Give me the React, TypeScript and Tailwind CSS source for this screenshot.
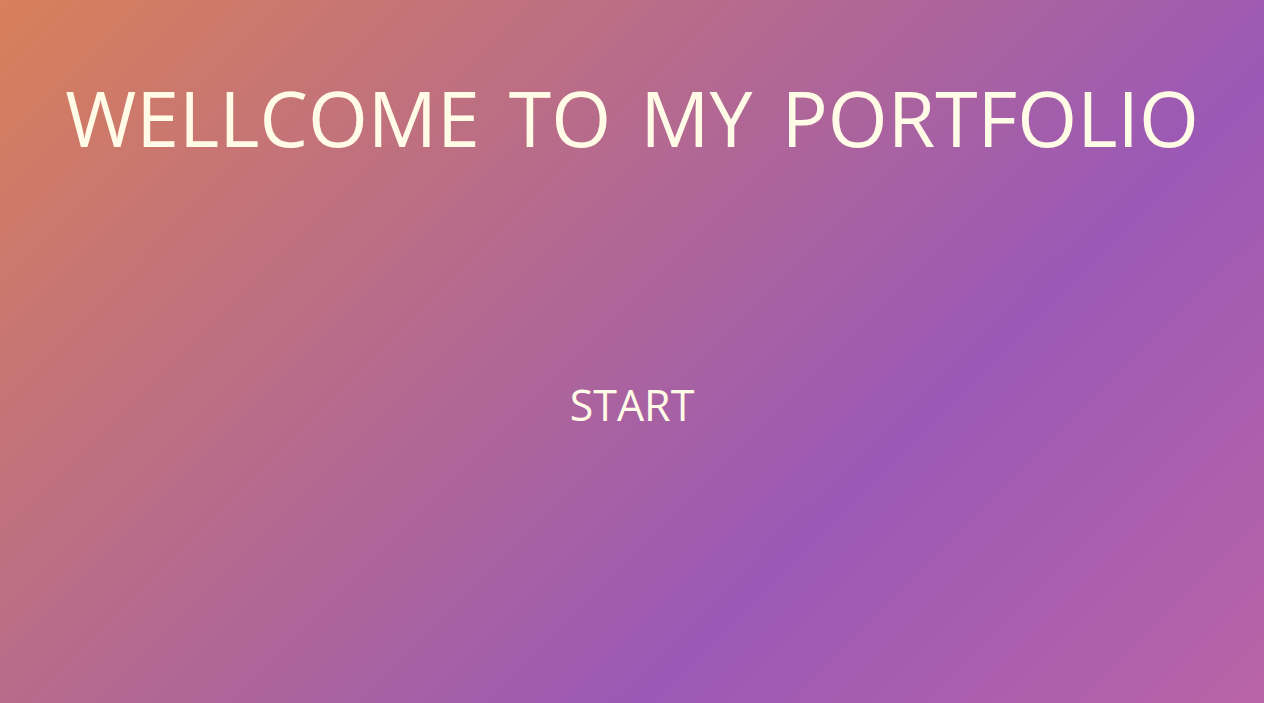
const App = () => {
  return (
    <div
      className="min-h-screen w-full flex flex-col items-center bg-[linear-gradient(135deg,#d8805a_0%,#9b59b6_68%,#b964a6_100%)] text-[#fffbe6]"
      style={{ fontFamily: '"Open Sans", "Noto Sans", sans-serif' }}
    >
      <h1 className="mt-[62px] text-[77px] leading-[112px] font-normal whitespace-nowrap [word-spacing:9px]">
        WELLCOME TO MY PORTFOLIO
      </h1>
      <button className="mt-[201px] text-[43px] leading-[60px] text-[#fffbe6] bg-transparent cursor-pointer">
        START
      </button>
    </div>
  );
};

export default App;
